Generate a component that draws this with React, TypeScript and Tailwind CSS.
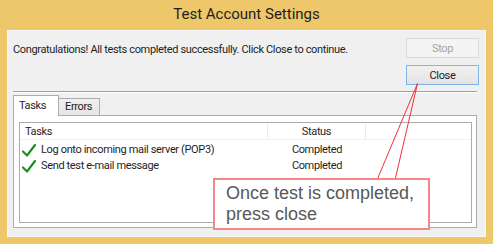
const rows = [
  { task: 'Log onto incoming mail server (POP3)', status: 'Completed' },
  { task: 'Send test e-mail message', status: 'Completed' },
]

function CheckMark() {
  return (
    <svg width="14" height="13" viewBox="0 0 14 13" className="shrink-0">
      <path d="M1 7.5 L5 11.5 L13 1" fill="none" stroke="#1e8f22" strokeWidth="2.2" strokeLinecap="round" strokeLinejoin="round" />
    </svg>
  )
}

export default function App() {
  return (
    <div className="w-[493px] h-[244px] bg-[#efc76b] flex flex-col font-['Roboto','Noto_Sans',sans-serif] text-[#1e1e1e] overflow-hidden">
      {/* Title bar */}
      <div className="h-[30px] flex items-center justify-center text-[15px] pb-[1px]">Test Account Settings</div>

      {/* Window body */}
      <div className="relative mx-[7px] mb-[7px] flex-1 bg-[#f0f0f0] border border-[#f7f7f7] flex flex-col text-[11px] tracking-[-0.35px]">
        <div className="h-[60px] flex justify-between pl-[5px] pr-[6px]">
          <p className="pt-[11px] whitespace-nowrap">
            Congratulations! All tests completed successfully. Click Close to continue.
          </p>
          <div className="pt-[7px] flex flex-col gap-[7px]">
            <button className="w-[73px] h-[20px] border border-[#d9d9d9] bg-[#f4f4f4] text-[#a3a3a3] leading-none">
              Stop
            </button>
            <button className="w-[73px] h-[20px] border border-[#7eb4ea] bg-gradient-to-b from-[#f2f2f2] to-[#e3e3e3] text-[#1e1e1e] leading-none">
              Close
            </button>
          </div>
        </div>

        {/* Separator */}
        <div className="ml-[5px] mr-[8px] border-t border-[#a0a0a0] border-b border-b-white" />

        {/* Tabs */}
        <div className="mt-[2px] ml-[5px] flex items-end h-[21px]">
          <div className="relative z-10 w-[46px] h-[21px] bg-white border border-[#acacac] border-b-0 flex items-center pl-[5px]">
            Tasks
          </div>
          <div className="w-[41px] h-[18px] bg-gradient-to-b from-[#f0f0f0] to-[#e5e5e5] border border-[#acacac] border-l-0 border-b-0 flex items-center pl-[6px]">
            Errors
          </div>
        </div>

        {/* Tab panel */}
        <div className="ml-[5px] mr-[8px] -mt-[1px] h-[113px] bg-white border border-[#acacac] pt-[6px] pl-[5px] pr-[4px] pb-[4px]">
          <div className="h-full border border-[#a8acb3] bg-white">
            <div className="h-[17px] flex border-b border-[#eef2f7]">
              <div className="w-[248px] pl-[5px] pt-[3px] flex items-center border-r border-[#e5ebf2]">Tasks</div>
              <div className="w-[98px] pt-[3px] flex items-center justify-center border-r border-[#e5ebf2]">Status</div>
            </div>
            {rows.map((r) => (
              <div key={r.task} className="h-[16px] pt-[4px] flex items-center">
                <div className="w-[248px] pl-[2px] flex items-center gap-[5px]">
                  <CheckMark />
                  <span>{r.task}</span>
                </div>
                <div className="w-[98px] text-center">{r.status}</div>
              </div>
            ))}
          </div>
        </div>

        {/* Callout */}
        <svg className="absolute left-0 top-0 pointer-events-none" width="479" height="207">
          <line x1="369" y1="149" x2="409.5" y2="52.5" stroke="#f0303a" strokeWidth="1" />
          <line x1="387" y1="149" x2="409.5" y2="52.5" stroke="#f0303a" strokeWidth="1" />
        </svg>
        <div className="absolute left-[205px] top-[147px] w-[217px] h-[52px] bg-white border-2 border-[#f3878a] pl-[11px] pt-[3px] whitespace-nowrap font-['Liberation_Sans',Arial,sans-serif] text-[18px] leading-[21px] tracking-normal text-[#585858]">
          Once test is completed,
          <br />
          press close
        </div>
      </div>
    </div>
  )
}
